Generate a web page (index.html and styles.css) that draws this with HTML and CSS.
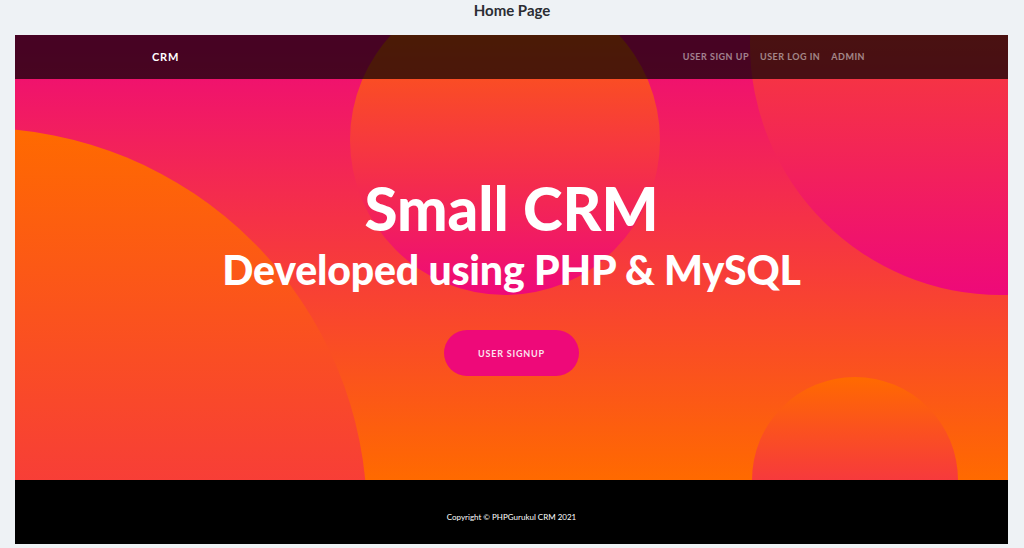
FILE: index.html
```html
<!DOCTYPE html>
<html lang="en">
<head>
<meta charset="utf-8">
<title>Home Page</title>
<link rel="stylesheet" href="styles.css">
</head>
<body>
  <div class="page-title">Home Page</div>
  <div class="frame">
    <header class="hero">
      <div class="circle circle-1"></div>
      <div class="circle circle-2"></div>
      <div class="circle circle-3"></div>
      <div class="circle circle-4"></div>
      <nav class="navbar">
        <a class="brand" href="#">CRM</a>
        <ul class="nav-links">
          <li><a href="#">User Sign up</a></li>
          <li><a href="#">User Log in</a></li>
          <li><a href="#">Admin</a></li>
        </ul>
      </nav>
      <div class="hero-content">
        <h1 class="heading">Small CRM</h1>
        <h2 class="subheading">Developed using PHP &amp; MySQL</h2>
        <a class="btn-pill" href="#">User Signup</a>
      </div>
    </header>
    <footer class="footer">
      <p>Copyright &copy; PHPGurukul CRM 2021</p>
    </footer>
  </div>
</body>
</html>
```
FILE: styles.css
```css
* { box-sizing: border-box; }
html, body { margin: 0; padding: 0; }
body {
  background: #eef2f5;
  font-family: Lato, "Liberation Sans", sans-serif;
  width: 1024px;
  height: 548px;
  overflow: hidden;
}
.page-title {
  height: 35px;
  text-align: center;
  font-family: Lato, sans-serif;
  font-weight: 700;
  font-size: 15px;
  line-height: 20px;
  color: #2b2d33;
}
.frame {
  margin-left: 15px;
  width: 993px;
}
.hero {
  position: relative;
  overflow: hidden;
  height: 445px;
  background: linear-gradient(180deg, #ee0979 0%, #ff6a00 100%);
}
.circle {
  position: absolute;
  border-radius: 50%;
  background: linear-gradient(180deg, #ff6a00 0%, #ee0979 100%);
}
.circle-1 { left: -426px; top: 93px; width: 778px; height: 778px; }
.circle-2 { left: 735px; top: -242px; width: 502px; height: 502px; }
.circle-3 { left: 737px; top: 342px; width: 206px; height: 206px; }
.circle-4 { left: 335px; top: -50px; width: 310px; height: 310px; }
.navbar {
  position: absolute;
  left: 0; top: 0; right: 0;
  height: 44px;
  background: rgba(0, 0, 0, 0.7);
  z-index: 2;
  display: flex;
  align-items: center;
  justify-content: space-between;
  padding: 0 143px 0 137px;
}
.brand {
  color: #fff;
  text-decoration: none;
  font-weight: 700;
  font-size: 11px;
  line-height: 14px;
  letter-spacing: 0.8px;
}
.nav-links {
  list-style: none;
  margin: 0;
  padding: 0;
  display: flex;
  gap: 11px;
  font-size: 9px;
  line-height: 12px;
}
.nav-links a {
  color: rgba(255, 255, 255, 0.5);
  text-decoration: none;
  text-transform: uppercase;
  font-weight: 700;
  font-size: 9px;
  letter-spacing: 0.5px;
}
.hero-content {
  position: relative;
  z-index: 1;
  padding-top: 143px;
  display: flex;
  flex-direction: column;
  align-items: center;
  color: #fff;
}
.heading {
  margin: 0;
  font-family: Lato, sans-serif;
  font-weight: 900;
  font-size: 60px;
  line-height: 1;
}
.subheading {
  margin: 11px 0 0;
  font-family: Lato, sans-serif;
  font-weight: 900;
  font-size: 41px;
  line-height: 1;
  letter-spacing: -0.2px;
}
.btn-pill {
  margin-top: 40px;
  width: 135px;
  height: 46px;
  border-radius: 23px;
  background: #ee0979;
  color: #fbe3ee;
  text-decoration: none;
  text-transform: uppercase;
  font-weight: 700;
  font-size: 9px;
  letter-spacing: 0.8px;
  display: flex;
  align-items: center;
  justify-content: center;
}
.footer {
  background: #000;
  height: 64px;
  display: flex;
  align-items: center;
  justify-content: center;
  padding-top: 10px;
}
.footer p {
  margin: 0;
  color: #fff;
  font-size: 8px;
}
```
